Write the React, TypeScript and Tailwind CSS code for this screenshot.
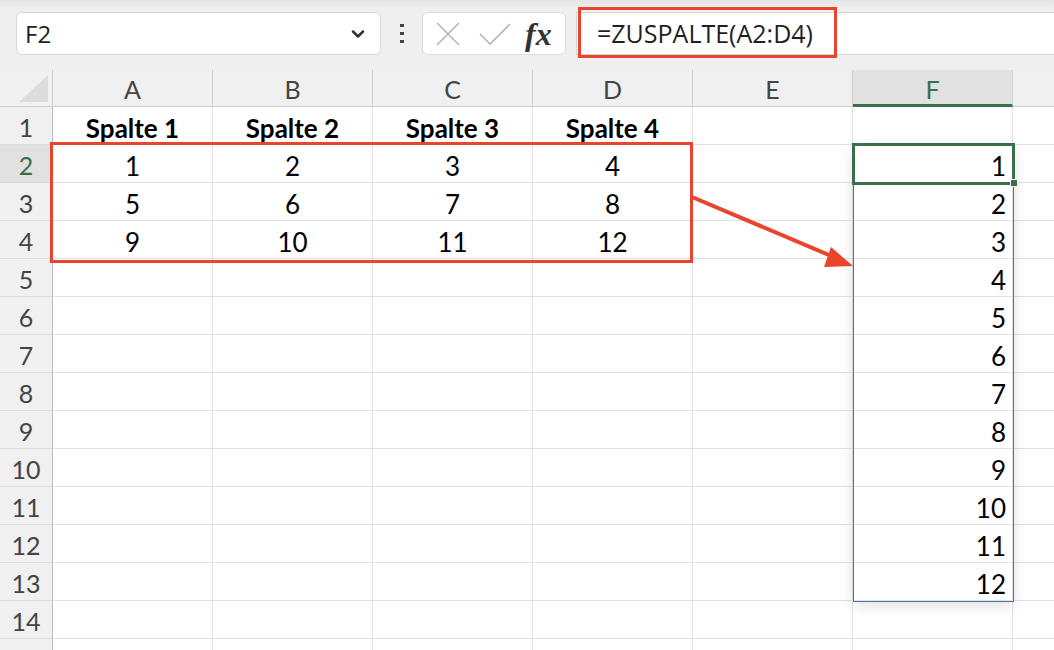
import { ChevronDown } from "lucide-react";

const cols = ["A", "B", "C", "D", "E", "F"];
const data: Record<number, string[]> = {
    1: ["Spalte 1", "Spalte 2", "Spalte 3", "Spalte 4", "", ""],
    2: ["1", "2", "3", "4", "", "1"],
    3: ["5", "6", "7", "8", "", "2"],
    4: ["9", "10", "11", "12", "", "3"],
};
const spill = ["1", "2", "3", "4", "5", "6", "7", "8", "9", "10", "11", "12"];

function cellValue(row: number, col: number) {
    if (col === 5) {
        const v = spill[row - 2];
        return v ?? "";
    }
    return data[row]?.[col] ?? "";
}

export default function App() {
    const rows = Array.from({ length: 15 }, (_, i) => i + 1);

    return (
        <div
            className="relative h-[650px] w-[1054px] overflow-hidden bg-white"
            style={{ fontFamily: "Lato, 'Noto Sans', sans-serif" }}
        >
            {/* toolbar */}
            <div className="flex h-[70px] items-start bg-gradient-to-b from-[#e4e4e4] from-0% to-[#efefef] to-[12%] pt-3">
                <div className="ml-4 flex h-[43px] w-[365px] items-center justify-between rounded-md border border-[#d6d6d6] bg-white pl-2 pr-3">
                    <span className="text-[24px] text-[#1f1f1f]" style={{ fontFamily: "'Open Sans', sans-serif" }}>
                        F2
                    </span>
                    <ChevronDown className="h-5 w-5 text-[#333]" strokeWidth={3} />
                </div>
                <div className="ml-[19px] mr-[18px] mt-[12px] flex flex-col gap-[5px]">
                    <span className="h-[3px] w-[4px] bg-[#444]" />
                    <span className="h-[3px] w-[4px] bg-[#444]" />
                    <span className="h-[3px] w-[4px] bg-[#444]" />
                </div>
                <div className="flex h-[43px] w-[144px] items-center rounded-md border border-[#dcdcdc] bg-white pl-[12px]">
                    <svg width="26" height="26" viewBox="0 0 26 26" className="mr-[18px]">
                        <path d="M2 2 L24 24 M24 2 L2 24" stroke="#b5b5b5" strokeWidth="1.6" fill="none" />
                    </svg>
                    <svg width="32" height="22" viewBox="0 0 32 22" className="mr-[14px]">
                        <path d="M1 11 L11 21 L31 1" stroke="#b5b5b5" strokeWidth="1.6" fill="none" />
                    </svg>
                    <span
                        className="text-[32px] font-semibold italic leading-none text-[#333]"
                        style={{ fontFamily: "'Liberation Serif', serif" }}
                    >
                        fx
                    </span>
                </div>
                <div className="ml-[10px] flex h-[43px] flex-1 items-center border-y border-l border-[#d6d6d6] bg-white pl-[20px]">
                    <span className="text-[25px] text-[#1f1f1f]" style={{ fontFamily: "'Open Sans', sans-serif" }}>
                        =ZUSPALTE(A2:D4)
                    </span>
                </div>
            </div>

            {/* grid */}
            <div className="grid grid-cols-[53px_repeat(6,160px)_1fr] grid-rows-[37px_repeat(15,38px)]">
                <div className="relative border-b border-r border-[#cfcfcf] bg-[#f0f0f0]">
                    <div
                        className="absolute bottom-[4px] right-[4px] h-[27px] w-[29px] bg-[#dcdcdc]"
                        style={{ clipPath: "polygon(100% 0, 100% 100%, 0 100%)" }}
                    />
                </div>
                {cols.map((c) => (
                    <div
                        key={c}
                        className={
                            c === "F"
                                ? "flex items-center justify-center border-b-[3px] border-r border-b-[#3a7049] border-r-[#d6d6d6] bg-[#e1e1e1] pt-[5px] text-[25px] text-[#3a7049]"
                                : "flex items-center justify-center border-b border-r border-[#cfcfcf] bg-[#f0f0f0] pt-[3px] text-[25px] text-[#444]"
                        }
                    >
                        {c}
                    </div>
                ))}
                <div className="border-b border-[#cfcfcf] bg-[#f0f0f0]" />

                {rows.map((r) => (
                    <div key={r} className="contents">
                        <div
                            className={
                                r === 2
                                    ? "flex items-center justify-center border-b border-r border-b-[#d8d8d8] border-r-[#bdbdbd] bg-[#e1e1e1] pt-[5px] text-[25px] text-[#3a7049]"
                                    : "flex items-center justify-center border-b border-r border-b-[#dcdcdc] border-r-[#bdbdbd] bg-[#f0f0f0] pt-[5px] text-[25px] text-[#444]"
                            }
                        >
                            {r < 15 ? r : ""}
                        </div>
                        {cols.map((c, ci) => {
                            const v = cellValue(r, ci);
                            return (
                                <div
                                    key={c}
                                    className={
                                        (ci === 5 ? "justify-end pr-[6px] " : "justify-center ") +
                                        (r === 1 ? "font-bold " : "") +
                                        "flex items-center border-b border-r border-[#e1e1e1] pt-[5px] text-[26px] text-black"
                                    }
                                >
                                    {v}
                                </div>
                            );
                        })}
                        <div className="border-b border-[#e1e1e1]" />
                    </div>
                ))}
            </div>

            {/* spill range border */}
            <div className="pointer-events-none absolute left-[853px] top-[145px] h-[457px] w-[161px] border border-[#4a6fb5] shadow-[0_4px_14px_rgba(0,0,0,0.12)]" />
            {/* active cell */}
            <div className="pointer-events-none absolute left-[852px] top-[143px] h-[42px] w-[163px] border-[3px] border-[#3a7049]" />
            <div className="pointer-events-none absolute left-[1010px] top-[179px] h-[8px] w-[8px] border border-white bg-[#3a7049]" />

            {/* annotations */}
            <div className="pointer-events-none absolute left-[578px] top-[7px] h-[51px] w-[259px] border-[3px] border-[#e8452c]" />
            <div className="pointer-events-none absolute left-[50px] top-[142px] h-[121px] w-[643px] border-[3px] border-[#e8452c]" />
            <svg className="pointer-events-none absolute left-0 top-0" width="1054" height="650">
                <line x1="692" y1="197" x2="836" y2="258" stroke="#e8452c" strokeWidth="4" />
                <polygon points="853,266 831,247 824,267" fill="#e8452c" />
            </svg>
        </div>
    );
}
